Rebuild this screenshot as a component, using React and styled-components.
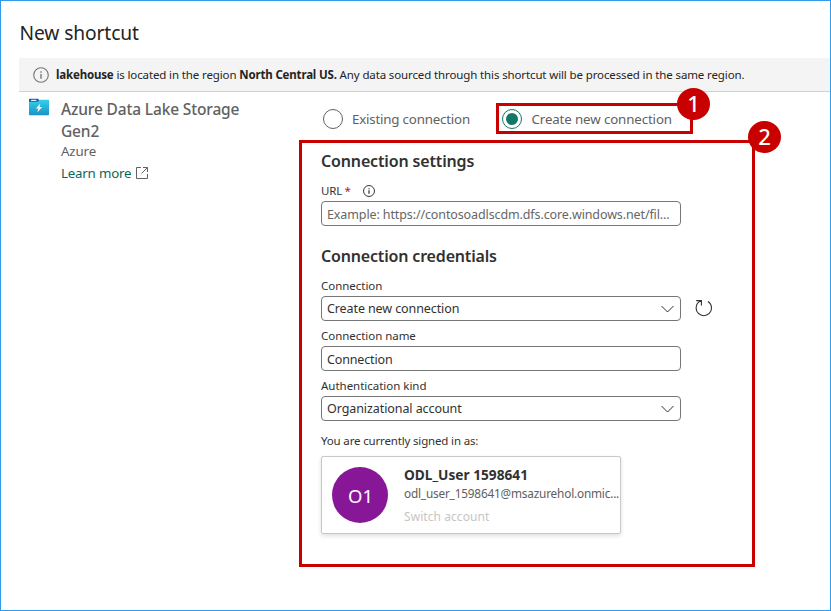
import React from "react";
import styled, { createGlobalStyle } from "styled-components";

const GlobalStyle = createGlobalStyle`
  *, *::before, *::after { box-sizing: border-box; }
  body { margin: 0; background: #fff; }
  h1, h2, h3, p { margin: 0; font-weight: inherit; }
`;

const Page = styled.div`
  width: 831px;
  height: 611px;
  overflow: hidden;
  border: 1px solid #2f9cf0;
  background: #fff;
  color: #323130;
  font-family: "Noto Sans", "Open Sans", sans-serif;
  padding: 19px 0 0 18px;
  white-space: nowrap;
`;

const Title = styled.h1`
  height: 38px;
  padding-left: 0.5px;
  font-size: 19.2px;
  font-weight: 450;
  line-height: 26px;
  letter-spacing: -0.1px;
  color: #242424;
`;

const Banner = styled.div`
  display: flex;
  align-items: center;
  gap: 7px;
  height: 34px;
  padding-left: 14px;
  border-bottom: 1px solid #d1d1d1;
  background: #f4f4f4;
  color: #242424;
  font-size: 11.5px;
  line-height: 18px;
  svg { flex: none; }
`;

const BannerText = styled.p`
  letter-spacing: -0.125px;
  b { letter-spacing: -0.17px; }
`;

const Body = styled.div`
  display: flex;
`;

const Source = styled.aside`
  display: flex;
  gap: 11px;
  width: 280px;
  padding: 6px 0 0 10px;
  svg { flex: none; }
`;

const SourceInfo = styled.div`
  width: 200px;
  color: #616161;
`;

const SourceName = styled.h2`
  margin-bottom: -2px;
  font-size: 15.5px;
  font-weight: 500;
  line-height: 22px;
  letter-spacing: -0.15px;
  white-space: normal;
`;

const SourceKind = styled.p`
  font-size: 13.3px;
  line-height: 22px;
  letter-spacing: -0.14px;
`;

const LearnMore = styled.a`
  display: flex;
  align-items: center;
  gap: 5px;
  color: #0c6656;
  font-size: 13.3px;
  line-height: 22px;
  letter-spacing: -0.2px;
  svg { margin-top: -1px; }
`;

const Main = styled.main`
  padding-top: 11px;
`;

const RadioRow = styled.div`
  display: flex;
  align-items: center;
  height: 31px;
  margin-bottom: 6px;
  padding-left: 24px;
`;

const RadioLabel = styled.label`
  display: flex;
  align-items: center;
  gap: ${(p) => p.$gap}px;
  width: ${(p) => p.$width}px;
  color: #616161;
  font-size: 13.3px;
  line-height: 20px;
  letter-spacing: ${(p) => p.$spacing}px;
`;

const RadioDot = styled.span`
  display: grid;
  place-items: center;
  flex: none;
  width: 20px;
  height: 20px;
  border: 1.5px solid ${(p) => (p.$on ? "#117865" : "#616161")};
  border-radius: 50%;
  &::after {
    content: "";
    width: 12px;
    height: 12px;
    border-radius: 50%;
    background: ${(p) => (p.$on ? "#117865" : "transparent")};
  }
`;

const Highlight = styled.div`
  position: relative;
  border: 3px solid #c80000;
`;

const ChoiceHighlight = styled(Highlight)`
  display: flex;
  align-items: center;
  width: 197px;
  height: 31px;
  padding-left: 3px;
`;

const PanelHighlight = styled(Highlight)`
  width: 456px;
  height: 427px;
  padding: 7px 0 0 19px;
`;

const Badge = styled.span`
  position: absolute;
  top: ${(p) => p.$top}px;
  right: ${(p) => p.$right}px;
  display: grid;
  place-items: center;
  width: 33px;
  height: 32px;
  padding-bottom: 2px;
  border-radius: 50%;
  background: #c80000;
  color: #fff;
  font-size: 22px;
  font-weight: 500;
  line-height: 30px;
`;

const SectionTitle = styled.h3`
  margin-top: ${(p) => p.$top}px;
  font-size: 16px;
  font-weight: 600;
  line-height: 22px;
  letter-spacing: ${(p) => p.$spacing}px;
`;

const FieldLabel = styled.div`
  display: flex;
  align-items: center;
  height: 18px;
  margin: ${(p) => p.$top}px 0 1px;
  font-size: 11.5px;
  line-height: 18px;
  letter-spacing: ${(p) => p.$spacing || 0}px;
`;

const Required = styled.span`
  margin: 0 12px 0 2.5px;
  color: #a4262c;
`;

const FieldRow = styled.div`
  display: flex;
  align-items: center;
  gap: 14px;
  height: 25px;
`;

const Control = styled.div`
  display: flex;
  align-items: center;
  justify-content: space-between;
  width: 360px;
  height: 25px;
  padding: ${(p) => (p.$input ? 2 : 0)}px 6.5px 0 5px;
  border: 1px solid #767676;
  border-radius: 4px;
  color: ${(p) => (p.$placeholder ? "#666" : "#323130")};
  font-size: 12.5px;
  line-height: 20px;
  letter-spacing: ${(p) => p.$spacing}px;
`;

const Account = styled.section`
  display: flex;
  gap: 16px;
  width: 300px;
  height: 78px;
  margin-top: 6px;
  padding: 10px 0 0 10px;
  border: 1px solid #c8c8c8;
  border-radius: 2px;
  box-shadow: 0 2px 4px rgba(0, 0, 0, 0.13);
`;

const Avatar = styled.div`
  flex: none;
  width: 56px;
  height: 56px;
  padding: 2px 0 0 1px;
  border-radius: 50%;
  background: #881798;
  color: #fff;
  font-size: 18.5px;
  line-height: 54px;
  text-align: center;
`;

const AccountInfo = styled.div`
  margin-top: -1px;
  line-height: 18px;
`;

const UserName = styled.p`
  font-size: 13.7px;
  font-weight: 700;
`;

const UserMail = styled.p`
  color: #605e5c;
  font-size: 11.8px;
  letter-spacing: -0.19px;
`;

const SwitchAccount = styled.p`
  margin-top: 6px;
  color: #c8c6c4;
  font-size: 12px;
  letter-spacing: 0.07px;
`;

function InfoIcon({ size, color, width = 1 }) {
  return (
    <svg width={size} height={size} viewBox="0 0 16 16" fill="none" stroke={color} strokeWidth={width}>
      <circle cx="8" cy="8" r="7.3" />
      <path d="M8 7v4.7M8 4.3v1.4" strokeWidth={width * 1.25} />
    </svg>
  );
}

function FolderIcon() {
  return (
    <svg width="21" height="18" viewBox="0 0 21 18">
      <defs>
        <linearGradient id="folder" x1="0" y1="0" x2="0" y2="1">
          <stop offset="0" stopColor="#32d0f0" />
          <stop offset="1" stopColor="#1b93c4" />
        </linearGradient>
      </defs>
      <path d="M0 1.2Q0 .8.5.8H8.8L10.6 2.2H20V5H0Z" fill="#0f5c9e" />
      <path d="M0 3.8H8.5L10.8 1.8H19.6Q20 1.8 20 2.3V16.6Q20 17.2 19.4 17.2H.6Q0 17.2 0 16.6Z" fill="url(#folder)" />
      <rect x="2" y="1.8" width="5.5" height="1.2" rx=".5" fill="#d8f2ff" />
      <path d="M11.4 5.4 6.9 10.4H9.5L8.2 14.4 13.2 9H10.4Z" fill="#fff" />
    </svg>
  );
}

function ExternalIcon() {
  return (
    <svg width="12" height="12" viewBox="0 0 12 12" fill="none" stroke="#616161">
      <path d="M5 .5H.5V11.5H11.5V7M7 .5H11.5V5M11.2.8 5.5 6.5" />
    </svg>
  );
}

function Chevron() {
  return (
    <svg width="13" height="8" viewBox="0 0 13 8" fill="none" stroke="#323130">
      <path d="M.5 1 6.5 7 12.5 1" />
    </svg>
  );
}

function RefreshIcon() {
  return (
    <svg width="18" height="20" viewBox="0 0 18 20" fill="none" stroke="#323130" strokeWidth="1.1">
      <path d="M1.2 1.6H6.4V6.6M6.2 1.8C3 3 1.1 5.8 1.1 9a7.7 7.7 0 0 0 15.4 0c0-2.8-1.3-5.1-3.6-6.5" />
    </svg>
  );
}

export default function App() {
  return (
    <Page>
      <GlobalStyle />
      <Title>New shortcut</Title>
      <Banner>
        <InfoIcon size={16} color="#757575" width={1.1} />
        <BannerText>
          <b>lakehouse</b> is located in the region <b>North Central US.</b> Any data sourced through
          this shortcut will be processed in the same region.
        </BannerText>
      </Banner>
      <Body>
        <Source>
          <FolderIcon />
          <SourceInfo>
            <SourceName>Azure Data Lake Storage Gen2</SourceName>
            <SourceKind>Azure</SourceKind>
            <LearnMore>
              Learn more
              <ExternalIcon />
            </LearnMore>
          </SourceInfo>
        </Source>
        <Main>
          <RadioRow>
            <RadioLabel $gap={9} $width={173} $spacing={-0.19}>
              <RadioDot />
              Existing connection
            </RadioLabel>
            <ChoiceHighlight>
              <RadioLabel $gap={9.5} $spacing={-0.12}>
                <RadioDot $on />
                Create new connection
              </RadioLabel>
              <Badge $top={-18} $right={-20}>1</Badge>
            </ChoiceHighlight>
          </RadioRow>
          <PanelHighlight>
            <Badge $top={-22} $right={-29}>2</Badge>
            <SectionTitle $top={0} $spacing={-0.15}>Connection settings</SectionTitle>
            <FieldLabel $top={10} $spacing={-0.2}>
              URL
              <Required>*</Required>
              <InfoIcon size={12} color="#323130" width={1.3} />
            </FieldLabel>
            <Control $input $placeholder $spacing={-0.115}>
              Example: https://contosoadlscdm.dfs.core.windows.net/fil...
            </Control>
            <SectionTitle $top={19} $spacing={-0.17}>Connection credentials</SectionTitle>
            <FieldLabel $top={10} $spacing={-0.03}>Connection</FieldLabel>
            <FieldRow>
              <Control $spacing={-0.1}>
                Create new connection
                <Chevron />
              </Control>
              <RefreshIcon />
            </FieldRow>
            <FieldLabel $top={6} $spacing={-0.04}>Connection name</FieldLabel>
            <Control $input $spacing={-0.15}>Connection</Control>
            <FieldLabel $top={6} $spacing={-0.02}>Authentication kind</FieldLabel>
            <Control $spacing={-0.08}>
              Organizational account
              <Chevron />
            </Control>
            <FieldLabel $top={11} $spacing={-0.16}>You are currently signed in as:</FieldLabel>
            <Account>
              <Avatar>O1</Avatar>
              <AccountInfo>
                <UserName>ODL_User 1598641</UserName>
                <UserMail>odl_user_1598641@msazurehol.onmic...</UserMail>
                <SwitchAccount>Switch account</SwitchAccount>
              </AccountInfo>
            </Account>
          </PanelHighlight>
        </Main>
      </Body>
    </Page>
  );
}
